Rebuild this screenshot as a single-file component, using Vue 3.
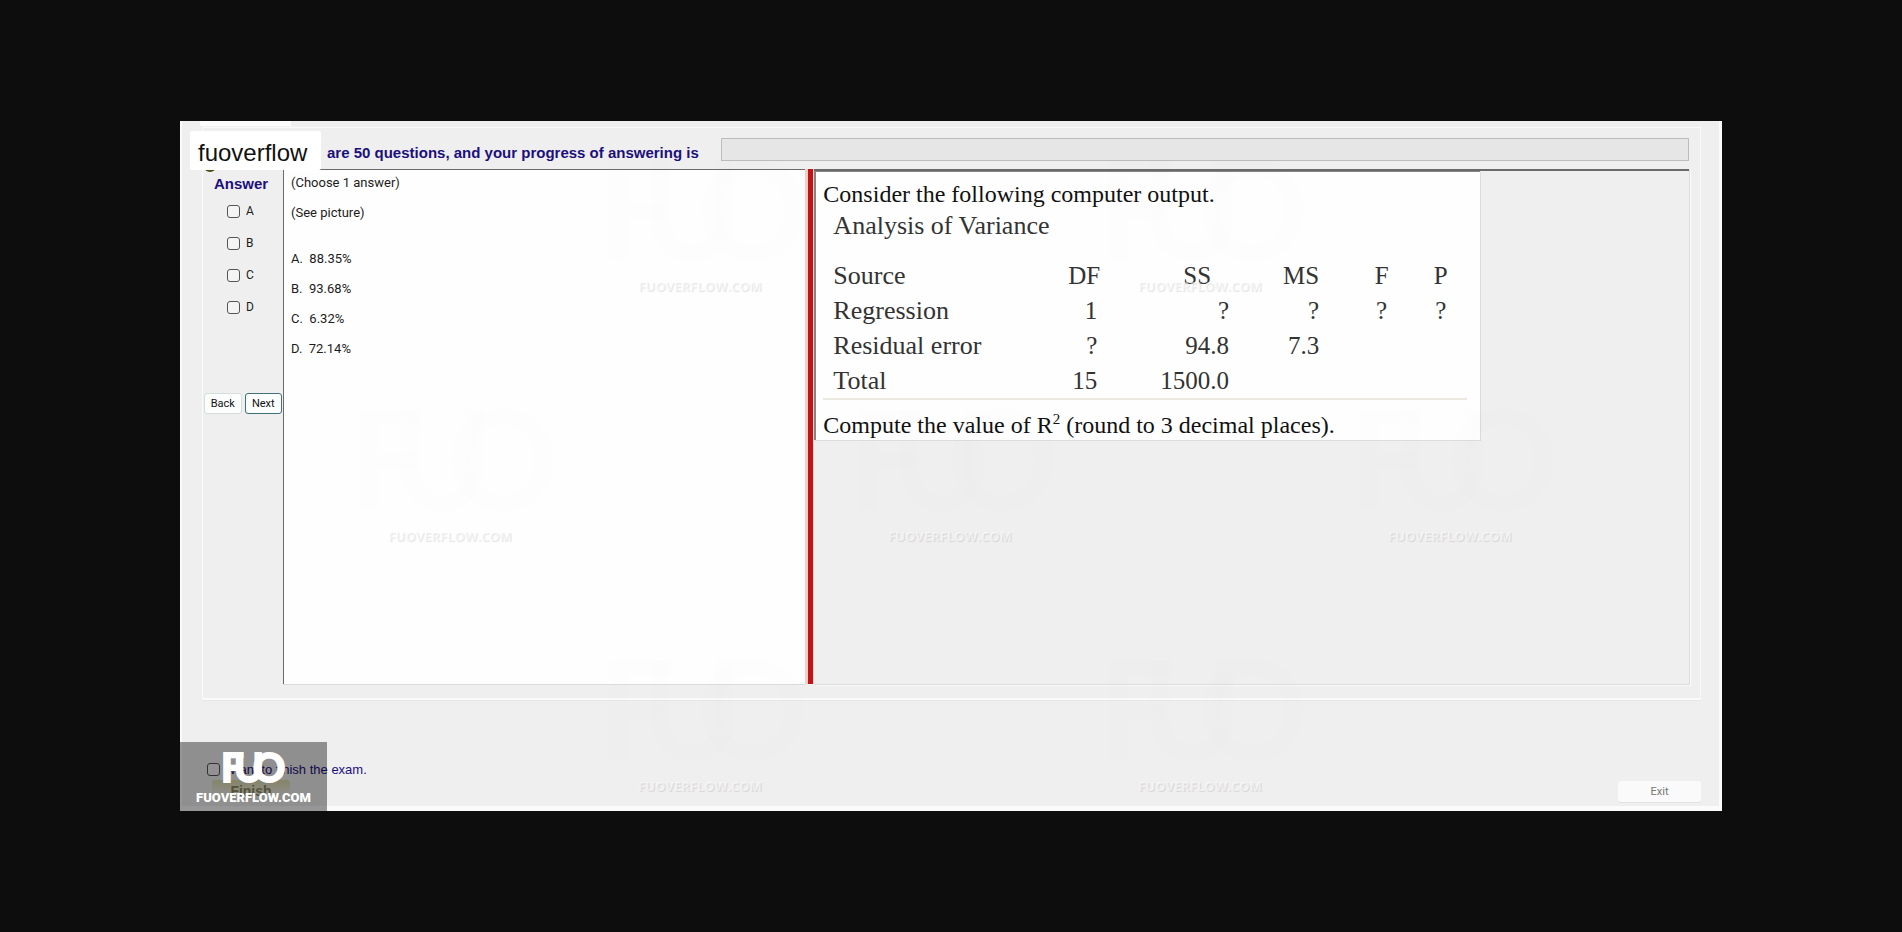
<script setup>
import { ref } from 'vue'

const letters = ['A', 'B', 'C', 'D']
const picked = ref([])
const finished = ref(false)
const options = [
  { key: 'A', value: '88.35%' },
  { key: 'B', value: '93.68%' },
  { key: 'C', value: '6.32%' },
  { key: 'D', value: '72.14%' },
]
const rows = [
  ['Regression', '1', '?', '?', '?', '?'],
  ['Residual error', '?', '94.8', '7.3', '', ''],
  ['Total', '15', '1500.0', '', '', ''],
]
const markRows = [
  { id: 'top', count: 2 },
  { id: 'middle', count: 3 },
  { id: 'bottom', count: 2 },
]
</script>

<template>
  <div class="page">
    <main class="exam">
      <section class="frame">
        <header class="top">
          <label class="progress-label" for="progress">are 50 questions, and your progress of answering is</label>
          <progress id="progress" class="progress" value="0" max="50"></progress>
        </header>

        <div class="work">
          <aside class="side">
            <h2 class="side-title">Answer</h2>
            <label v-for="l in letters" :key="l" class="choice">
              <input v-model="picked" class="box" type="checkbox" :value="l" />
              <span>{{ l }}</span>
            </label>
            <div class="nav">
              <button class="btn" type="button">Back</button>
              <button class="btn next" type="button">Next</button>
            </div>
          </aside>

          <article class="question">
            <p>(Choose 1 answer)</p>
            <p>(See picture)</p>
            <ul class="options">
              <li v-for="o in options" :key="o.key">{{ o.key }}.&nbsp; {{ o.value }}</li>
            </ul>
          </article>

          <div class="divider"></div>

          <section class="viewer">
            <div class="picture">
              <p class="statement">Consider the following computer output.</p>
              <table class="anova">
                <caption>Analysis of Variance</caption>
                <thead>
                  <tr>
                    <th class="c-source">Source</th>
                    <th class="c-df">DF</th>
                    <th class="c-ss">SS</th>
                    <th class="c-ms">MS</th>
                    <th class="c-f">F</th>
                    <th class="c-p">P</th>
                  </tr>
                </thead>
                <tbody>
                  <tr v-for="r in rows" :key="r[0]">
                    <td v-for="(c, i) in r" :key="i">{{ c }}</td>
                  </tr>
                </tbody>
              </table>
              <p class="statement">Compute the value of R<sup>2</sup> (round to 3 decimal places).</p>
            </div>
          </section>
        </div>
      </section>

      <footer class="bottom">
        <div class="finish">
          <label class="finish-label">
            <input v-model="finished" class="box" type="checkbox" />
            <span>I want to finish the exam.</span>
          </label>
          <button class="finish-btn" type="button">Finish</button>
        </div>
        <button class="exit" type="button">Exit</button>
      </footer>

      <div class="tab-strip"></div>
      <div class="dot"></div>
      <div class="name-tag">fuoverflow</div>

      <div class="marks" aria-hidden="true">
        <div v-for="m in markRows" :key="m.id" class="mark-row">
          <div v-for="n in m.count" :key="n" class="mark">
            <svg class="mark-logo" viewBox="0 0 64 32">
              <text x="1" y="31">F</text>
              <text x="14" y="31">U</text>
              <text x="31" y="31">O</text>
            </svg>
            <span>FUOVERFLOW.COM</span>
          </div>
        </div>
      </div>

      <div class="brand">
        <svg class="brand-logo" viewBox="0 0 64 32" role="img" aria-label="FUO">
          <text x="-1" y="31">F</text>
          <text x="12" y="31">U</text>
          <text x="31" y="31">O</text>
        </svg>
        <span class="brand-name">FUOVERFLOW.COM</span>
      </div>
    </main>
  </div>
</template>

<style>
body {
  margin: 0;
  background: #0d0d0d;
}
</style>

<style scoped>
.page {
  box-sizing: border-box;
  min-height: 100vh;
  padding: 121px 180px;
  display: flex;
  background: #0d0d0d;
  font-family: "Liberation Sans", Arial, sans-serif;
  color: #1c1c1c;
}
.exam {
  position: relative;
  flex: 1;
  box-sizing: border-box;
  display: flex;
  flex-direction: column;
  padding: 6px 21px 9px 22px;
  background: #efefef;
  box-shadow: inset 2px 0 0 #fbfbfb, inset -3px -5px 0 #fbfbfb;
}
.frame {
  flex: 1;
  display: flex;
  flex-direction: column;
  padding: 0 11px 14px 0;
  border: 1px solid #fafafa;
  border-bottom-width: 2px;
  box-shadow: 0 1px 0 #e6e6e6;
}
.top {
  display: flex;
  align-items: center;
  gap: 22px;
  height: 41px;
  padding-left: 124px;
}
.progress-label {
  padding-top: 8px;
  font-size: 15px;
  line-height: 18px;
  font-weight: 700;
  color: #1b0f7c;
  white-space: nowrap;
}
.progress {
  appearance: none;
  flex: 1;
  box-sizing: border-box;
  height: 23px;
  margin-top: 2px;
  border: 1px solid #bcbcbc;
  background: #e6e6e6;
}
.progress::-webkit-progress-bar {
  background: #e6e6e6;
}
.work {
  flex: 1;
  display: grid;
  grid-template-columns: 80px 522fr 9px 874fr;
}
.side {
  padding: 6px 1px 0;
  display: flex;
  flex-direction: column;
}
.side-title {
  margin: 0 0 2px;
  padding-left: 10px;
  font-size: 15px;
  line-height: 18px;
  color: #1b0f7c;
}
.choice {
  display: flex;
  align-items: center;
  gap: 6px;
  height: 32px;
  padding-left: 23px;
  font-family: Roboto, sans-serif;
  font-size: 12px;
}
.box {
  appearance: none;
  box-sizing: border-box;
  width: 13px;
  height: 13px;
  margin: 0;
  border: 1px solid #555;
  border-radius: 3px;
  background: #f4f4f4;
}
.box:checked {
  background: #1b0f7c;
}
.nav {
  display: flex;
  gap: 3px;
  margin-top: 70px;
}
.btn {
  flex: 1;
  height: 21px;
  padding: 0;
  border: 1px solid #d4dedd;
  border-radius: 3px;
  background: #fcfdfd;
  font-family: Roboto, sans-serif;
  font-size: 11px;
  color: #111;
}
.next {
  border-color: #3d7077;
}
.question {
  padding: 5px 7px;
  border: solid #6a6a6a;
  border-width: 1px 0 0 1px;
  background: #fefefe;
  box-shadow: 0 1px 0 #dcdcdc;
  font-family: Roboto, sans-serif;
  font-size: 13px;
  line-height: 16px;
}
.question p {
  margin: 0 0 14px;
}
.options {
  margin: 30px 0 0;
  padding: 0;
  list-style: none;
}
.options li {
  margin-bottom: 14px;
}
.divider {
  border: solid #f3cfc8;
  border-width: 0 1px 0 3px;
  background: #bf1518;
}
.viewer {
  border-top: 2px solid #6a6a6a;
  box-shadow: 1px 1px 0 #dcdcdc, 2px 2px 0 #fafafa;
}
.picture {
  box-sizing: border-box;
  width: 76%;
  min-width: 666px;
  padding: 8px 13px 1px 7px;
  border: solid #858585;
  border-width: 1px 0 0 2px;
  background: #fefefe;
  box-shadow: 1px 1px 0 #dcdcdc;
  font-family: "Liberation Serif", "Times New Roman", serif;
}
.statement {
  margin: 0;
  font-size: 24px;
  line-height: 28px;
  color: #111;
}
.statement sup {
  font-size: 15px;
  line-height: 0;
}
.anova {
  width: 100%;
  margin: 2px 0 11px;
  border-collapse: collapse;
  table-layout: fixed;
  border-bottom: 2px solid #ebe9df;
  font-size: 25px;
  color: #333;
}
.anova caption {
  padding: 0 0 16px 10px;
  font-size: 26px;
  line-height: 32px;
  text-align: left;
}
.anova th,
.anova td {
  box-sizing: border-box;
  height: 35px;
  padding: 0;
  font-weight: 400;
  line-height: 35px;
  text-align: right;
}
.anova th:first-child,
.anova td:first-child {
  padding-left: 10px;
  font-size: 26px;
  text-align: left;
}
.c-source { width: 32%; }
.c-df { width: 11%; }
.c-ss { width: 20%; }
.c-ms { width: 14%; }
.c-f { width: 11%; }
.c-p { width: 12%; }
.anova td:nth-child(2) {
  padding-right: 3px;
}
.anova th:nth-child(3) {
  padding-right: 18px;
}
.anova th:nth-child(5),
.anova td:nth-child(5) {
  padding-left: 54px;
  text-align: center;
}
.anova th:nth-child(6),
.anova td:nth-child(6) {
  padding-left: 24px;
  text-align: center;
}
.bottom {
  display: flex;
  justify-content: space-between;
  align-items: flex-end;
  padding: 61px 0 0 5px;
}
.finish-label {
  display: flex;
  align-items: center;
  gap: 3px;
  height: 16px;
  font-size: 13px;
  color: #1b0f7c;
}
.finish-btn {
  display: block;
  width: 78px;
  height: 22px;
  margin: 3px 0 0 5px;
  padding: 0;
  border: 0;
  border-radius: 3px;
  background: linear-gradient(#dedeae, #ebebe4 60%);
  font: 700 14px "Liberation Sans", Arial, sans-serif;
  color: #8a8a5a;
}
.exit {
  width: 83px;
  height: 21px;
  padding: 0;
  border: 0;
  border-radius: 3px;
  background: #fafafa;
  box-shadow: 0 1px 0 #e2e2e2;
  font-family: Roboto, sans-serif;
  font-size: 11px;
  color: #777;
}
.tab-strip {
  position: absolute;
  top: 0;
  left: 20px;
  width: 91px;
  height: 5px;
  background: #fcfcfc;
}
.dot {
  position: absolute;
  top: 39px;
  left: 24px;
  width: 12px;
  height: 12px;
  border-radius: 50%;
  background: #4c4a10;
}
.name-tag {
  position: absolute;
  top: 10px;
  left: 10px;
  box-sizing: border-box;
  width: 131px;
  height: 39px;
  padding-left: 8px;
  border-radius: 2px;
  background: #fff;
  font-size: 24px;
  line-height: 43px;
  color: #111;
}
.marks {
  position: absolute;
  inset: 0;
  overflow: hidden;
  pointer-events: none;
}
.mark-row {
  position: absolute;
  left: 415px;
  top: 37px;
  display: flex;
  gap: 290px;
}
.mark-row:nth-child(2) {
  left: 165px;
  top: 287px;
}
.mark-row:nth-child(3) {
  top: 537px;
}
.mark {
  width: 210px;
  display: flex;
  flex-direction: column;
  align-items: center;
  gap: 14px;
  font: 700 13px/18px "Open Sans", sans-serif;
  color: rgba(255, 255, 255, 0.5);
  text-shadow: 1px 1px 1px rgba(0, 0, 0, 0.1);
}
.mark-logo {
  width: 210px;
  height: 105px;
  overflow: visible;
  fill: rgba(128, 128, 128, 0.008);
  font: 700 42px Lato, sans-serif;
  text-shadow: none;
}
.brand {
  position: absolute;
  left: 0;
  bottom: 0;
  box-sizing: border-box;
  width: 147px;
  height: 69px;
  padding-top: 9px;
  display: flex;
  flex-direction: column;
  align-items: center;
  gap: 6px;
  background: rgba(0, 0, 0, 0.4);
  color: #fff;
}
.brand-logo {
  width: 64px;
  height: 32px;
  overflow: visible;
  fill: #fff;
  stroke: #fff;
  stroke-width: 2;
  font: 700 40px Lato, sans-serif;
}
.brand-name {
  font: 900 13px/18px Roboto, sans-serif;
}
</style>
